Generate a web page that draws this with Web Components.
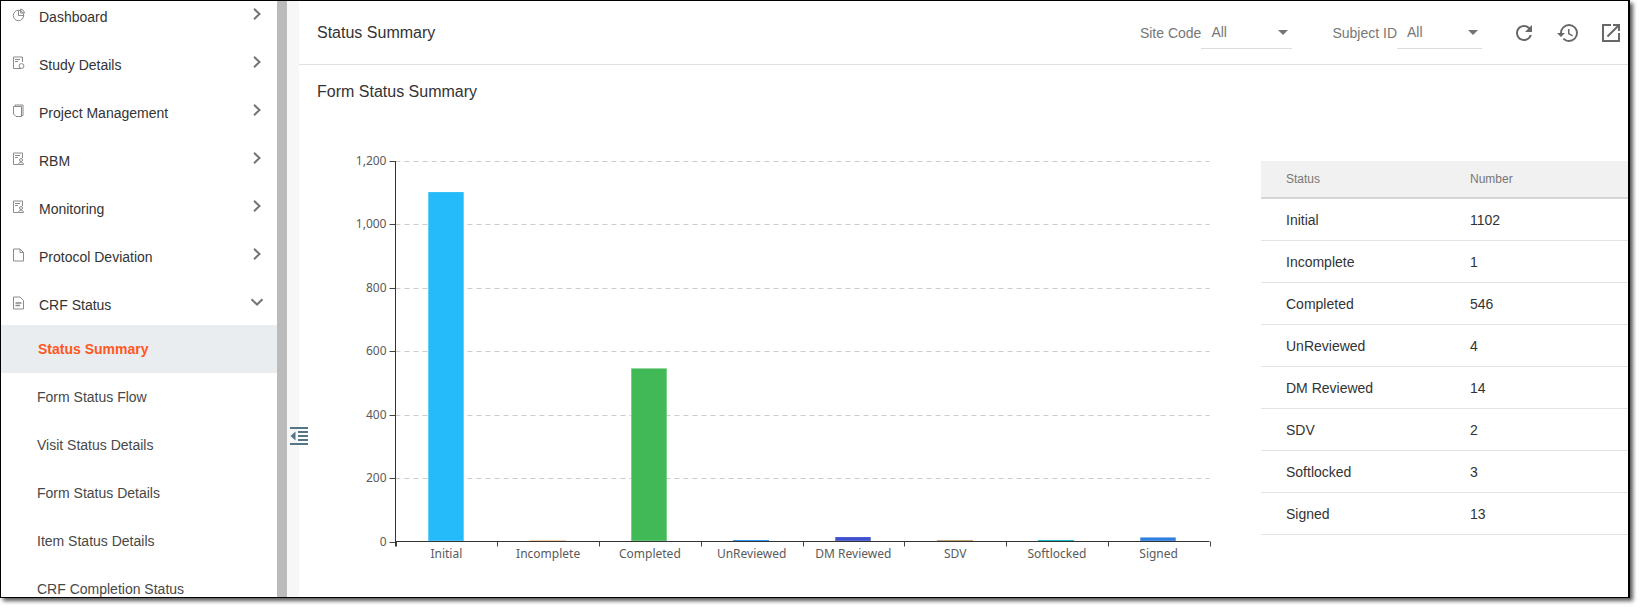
<!DOCTYPE html>
<html>
<head>
<meta charset="utf-8">
<style>
html,body{margin:0;padding:0;background:#fff;}
body{font-family:"Liberation Sans",Arial,sans-serif;width:1641px;height:609px;overflow:hidden;}
</style>
</head>
<body>
<app-frame>
	<side-nav slot="nav">
		<nav-item icon="pie" label="Dashboard" arrow="right"></nav-item>
		<nav-item icon="study" label="Study Details" arrow="right"></nav-item>
		<nav-item icon="pages" label="Project Management" arrow="right"></nav-item>
		<nav-item icon="user" label="RBM" arrow="right"></nav-item>
		<nav-item icon="user" label="Monitoring" arrow="right"></nav-item>
		<nav-item icon="page" label="Protocol Deviation" arrow="right"></nav-item>
		<nav-item icon="form" label="CRF Status" arrow="down"></nav-item>
		<sub-item active label="Status Summary"></sub-item>
		<sub-item label="Form Status Flow"></sub-item>
		<sub-item label="Visit Status Details"></sub-item>
		<sub-item label="Form Status Details"></sub-item>
		<sub-item label="Item Status Details"></sub-item>
		<sub-item label="CRF Completion Status"></sub-item>
	</side-nav>
	<page-header slot="main" title-text="Status Summary">
		<filter-select label="Site Code" width="91" gap="0"></filter-select>
		<filter-select label="Subject ID" width="85" gap="0" style="margin-left:40px"></filter-select>
	</page-header>
	<summary-panel slot="main" title-text="Form Status Summary">
		<status-chart></status-chart>
		<status-table></status-table>
	</summary-panel>
</app-frame>
<script>
const rows = [
	{name:"Initial", value:1102, color:"#25baf9"},
	{name:"Incomplete", value:1, color:"#f9cfae"},
	{name:"Completed", value:546, color:"#42b957"},
	{name:"UnReviewed", value:4, color:"#2f9bf2"},
	{name:"DM Reviewed", value:14, color:"#3f51cf"},
	{name:"SDV", value:2, color:"#c4a873"},
	{name:"Softlocked", value:3, color:"#16bfc4"},
	{name:"Signed", value:13, color:"#2e7fe0"}
]

const navIcons = {
	pie:`<circle cx="6.5" cy="7.5" r="5.2"/><path d="M6.5 2.3V7.5H11.7"/><path d="M8.6 1a5 5 0 0 1 4 4H8.6z"/>`,
	study:`<path d="M9.5 12.5H1.5V1H10.5V6"/><path d="M3 3.5H8M3 5.5H6"/><circle cx="9.5" cy="10" r="2.4"/>`,
	pages:`<path d="M3 2.5V1H11V11.5H9.5"/><path d="M1.5 2.5H9.5V12.5H4L1.5 10z"/>`,
	user:`<path d="M6 12.5H1.5V1H10.5V6"/><path d="M3 3.5H8M3 5.5H6"/><circle cx="9" cy="8" r="1.5"/><path d="M6.5 12.5c0-3 5-3 5 0z"/>`,
	page:`<path d="M1.5 1H8L11.5 4.5V13H1.5z"/><path d="M8 1V4.5H11.5"/>`,
	form:`<path d="M1.5 1H8L11.5 4.5V13H1.5z"/><path d="M3.5 7H9.5M3.5 9.5H8" stroke-width="1.6"/>`
}

class AppFrame extends HTMLElement{
	constructor(){
		super()
		this.attachShadow({mode:"open"}).innerHTML = `
		<style>
		:host{display:flex;width:1630px;height:598px;box-sizing:border-box;background:#fff;
			border:1px solid #000;border-right-width:2px;box-shadow:3px 3px 4px rgba(0,0,0,.65);position:relative;}
		.nav{width:276px;flex:none;overflow:hidden;}
		.thumb{width:10px;flex:none;background:#bbb;}
		.main{flex:1;min-width:0;border-left:12px solid #f7f7f7;display:flex;flex-direction:column;}
		svg{position:absolute;left:289px;top:426px;}
		</style>
		<div class="nav"><slot name="nav"></slot></div>
		<div class="thumb"></div>
		<div class="main"><slot name="main"></slot></div>
		<svg width="18" height="18" viewBox="0 0 18 18" fill="#557686">
			<rect x="0" y="0" width="18" height="2"/><rect x="0" y="16" width="18" height="2"/>
			<rect x="8" y="4" width="10" height="2"/><rect x="8" y="8" width="10" height="2"/><rect x="8" y="12" width="10" height="2"/>
			<path d="M5.5 4.5V13.5L0.5 9z"/>
		</svg>`
	}
}

class SideNav extends HTMLElement{
	constructor(){
		super()
		this.attachShadow({mode:"open"}).innerHTML = `
		<style>
		:host{display:flex;flex-direction:column;margin-top:-4px;}
		</style>
		<slot></slot>`
	}
}

class NavItem extends HTMLElement{
	connectedCallback(){
		let down = this.getAttribute("arrow") == "down"
		let arrow = down
			? `<svg class="arrow" width="14" height="8" viewBox="0 0 14 8"><path d="M1.5 1.2L7 6.5L12.5 1.2" fill="none" stroke="#757575" stroke-width="2"/></svg>`
			: `<svg class="arrow" width="14" height="12" viewBox="0 0 14 12"><path d="M3 .8L8.5 6L3 11.2" fill="none" stroke="#757575" stroke-width="2"/></svg>`
		this.attachShadow({mode:"open"}).innerHTML = `
		<style>
		:host{display:flex;align-items:center;height:40px;margin-bottom:${down?0:8}px;padding-left:11px;padding-right:${down?13:12}px;
			font-size:14px;color:#333;}
		.icon{flex:none;margin-right:14px;margin-bottom:4px;}
		.arrow{flex:none;margin-left:auto;margin-bottom:6px;}
		</style>
		<svg class="icon" width="13" height="14" viewBox="0 0 13 14" fill="none" stroke="#8a8a8a" stroke-width="1">${navIcons[this.getAttribute("icon")]}</svg>
		<span>${this.getAttribute("label")}</span>
		${arrow}`
	}
}

class SubItem extends HTMLElement{
	connectedCallback(){
		this.attachShadow({mode:"open"}).innerHTML = `
		<style>
		:host{display:flex;align-items:center;height:48px;padding-left:36px;font-size:14px;color:#484848;}
		:host([active]){background:#eaedf0;color:#ff5722;font-weight:bold;padding-left:37px;}
		</style>
		<span>${this.getAttribute("label")}</span>`
	}
}

class PageHeader extends HTMLElement{
	connectedCallback(){
		this.attachShadow({mode:"open"}).innerHTML = `
		<style>
		:host{display:flex;align-items:center;height:63px;box-sizing:content-box;flex:none;
			border-bottom:1px solid #e0e0e0;padding-left:18px;padding-right:5px;}
		h1{margin:0;font-size:16px;font-weight:normal;color:#333;}
		.right{margin-left:auto;display:flex;align-items:center;}
		.tools{display:flex;margin-left:30px;gap:19.5px;}
		svg{width:24px;height:24px;fill:#686868;display:block;}
		</style>
		<h1>${this.getAttribute("title-text")}</h1>
		<div class="right">
			<slot></slot>
			<div class="tools">
				<svg viewBox="0 0 24 24"><path d="M17.65 6.35A7.958 7.958 0 0 0 12 4c-4.42 0-7.99 3.58-7.99 8s3.57 8 7.99 8c3.73 0 6.84-2.55 7.73-6h-2.08A5.99 5.99 0 0 1 12 18c-3.31 0-6-2.69-6-6s2.69-6 6-6c1.66 0 3.14.69 4.22 1.78L13 11h7V4l-2.35 2.35z"/></svg>
				<svg viewBox="0 0 24 24"><path d="M13 3a9 9 0 0 0-9 9H1l3.89 3.89.07.14L9 12H6c0-3.87 3.13-7 7-7s7 3.13 7 7-3.13 7-7 7c-1.93 0-3.68-.79-4.94-2.06l-1.42 1.42A8.954 8.954 0 0 0 13 21a9 9 0 0 0 0-18zm-1 5v5l4.28 2.54.72-1.21-3.5-2.08V8H12z"/></svg>
				<svg viewBox="0 0 24 24"><path d="M19 19H5V5h7V3H3v18h18v-9h-2v7zM14 3v2h3.59l-9.83 9.83 1.41 1.41L19 6.41V10h2V3h-7z"/></svg>
			</div>
		</div>`
	}
}

class FilterSelect extends HTMLElement{
	connectedCallback(){
		this.attachShadow({mode:"open"}).innerHTML = `
		<style>
		:host{display:inline-flex;align-items:center;font-size:14px;color:#777;}
		.box{display:flex;align-items:center;height:32px;margin-left:${this.getAttribute("gap")}px;width:${this.getAttribute("width")}px;
			box-sizing:border-box;border-bottom:1px solid #dcdcdc;padding:0 4px 0 10px;}
		.tri{margin-left:auto;width:0;height:0;border-left:5px solid transparent;border-right:5px solid transparent;border-top:5px solid #757575;}
		</style>
		<span>${this.getAttribute("label")}</span>
		<div class="box"><span>All</span><i class="tri"></i></div>`
	}
}

class SummaryPanel extends HTMLElement{
	connectedCallback(){
		this.attachShadow({mode:"open"}).innerHTML = `
		<style>
		:host{display:flex;flex-direction:column;flex:1;min-height:0;}
		h2{margin:0;height:53px;flex:none;display:flex;align-items:center;padding-left:18px;font-size:16px;font-weight:normal;color:#333;}
		.body{display:flex;flex:1;min-height:0;}
		</style>
		<h2>${this.getAttribute("title-text")}</h2>
		<div class="body"><slot></slot></div>`
	}
}

class StatusChart extends HTMLElement{
	connectedCallback(){
		// plot box, in svg units: the svg starts at x 299, y 118 of the page
		const left = 96.5, right = 910.5, top = 43, bottom = 423.5
		const y = v => bottom-v/1200*(bottom-top)
		const band = (right-left)/rows.length
		let out = ""
		for(let v=0;v<=1200;v+=200){
			let py = Math.round(y(v))+.5
			if(v>0) out += `<line x1="${left}" x2="${right}" y1="${py}" y2="${py}" stroke="#ccc" stroke-dasharray="5 4"/>`
			out += `<line x1="${left-6}" x2="${left}" y1="${py}" y2="${py}" stroke="#444"/>`
			out += `<text x="${left-9}" y="${py+3}" text-anchor="end">${v.toLocaleString("en-US")}</text>`
		}
		rows.forEach((row,i)=>{
			let cx = left+band*(i+.5)
			let bx = Math.floor(cx-18)
			let h = Math.max(row.value/1200*(bottom-top),1.5)
			out += `<rect x="${bx}" y="${bottom-h}" width="36" height="${h}" fill="${row.color}"/>`
			if(h>3) out += `<rect x="${bx+.5}" y="${bottom-h-.5}" width="35" height="${h}" fill="none" stroke="#fff" stroke-opacity=".3"/>`
			out += `<text x="${cx}" y="${bottom+16}" text-anchor="middle" class="cat">${row.name}</text>`
		})
		for(let i=0;i<=rows.length;i++){
			let px = Math.round(left+band*i)+.5
			out += `<line x1="${px}" x2="${px}" y1="${bottom}" y2="${bottom+5}" stroke="#444"/>`
		}
		out += `<line x1="${left}" x2="${left}" y1="${top}" y2="${bottom+5}" stroke="#333"/>`
		out += `<line x1="${left}" x2="${right}" y1="${bottom}" y2="${bottom}" stroke="#333"/>`
		this.attachShadow({mode:"open"}).innerHTML = `
		<style>
		:host{display:block;width:962px;flex:none;}
		svg{display:block;}
		text{font-family:"Noto Sans","Open Sans",sans-serif;font-size:12px;fill:#5a5a5a;}
		</style>
		<svg width="962" height="470" viewBox="0 0 962 470">${out}</svg>`
	}
}

class StatusTable extends HTMLElement{
	connectedCallback(){
		this.attachShadow({mode:"open"}).innerHTML = `
		<style>
		:host{display:block;flex:1;min-width:0;margin-top:43px;}
		.row{display:grid;grid-template-columns:184px 1fr;align-items:center;height:41px;padding-left:25px;
			border-bottom:1px solid #e3e3e3;font-size:14px;color:#333;}
		.head{height:36px;background:#f1f1f1;border-bottom:2px solid #d6d6d6;font-size:12px;color:#777;}
		</style>
		<div class="row head"><span>Status</span><span>Number</span></div>
		${rows.map(r=>`<div class="row"><span>${r.name}</span><span>${r.value}</span></div>`).join("")}`
	}
}

window.customElements.define("app-frame", AppFrame)
window.customElements.define("side-nav", SideNav)
window.customElements.define("nav-item", NavItem)
window.customElements.define("sub-item", SubItem)
window.customElements.define("page-header", PageHeader)
window.customElements.define("filter-select", FilterSelect)
window.customElements.define("summary-panel", SummaryPanel)
window.customElements.define("status-chart", StatusChart)
window.customElements.define("status-table", StatusTable)
</script>
</body>
</html>
